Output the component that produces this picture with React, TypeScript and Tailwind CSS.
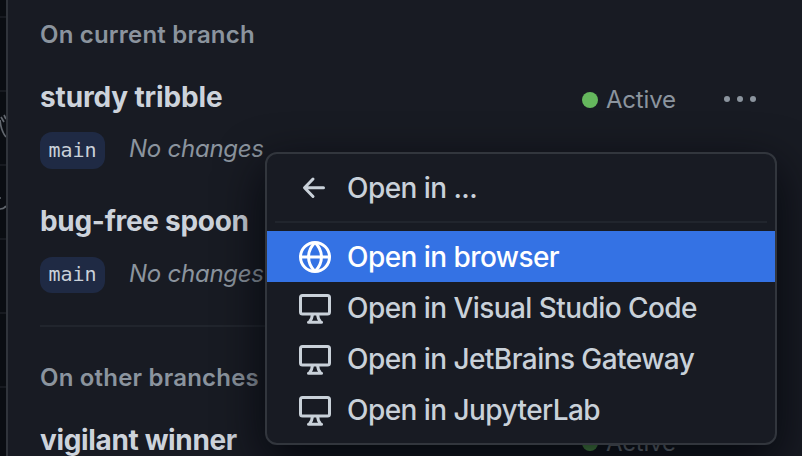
import type { ReactNode } from 'react';

const sans = "font-['Inter','Liberation_Sans',sans-serif]";

function DesktopIcon() {
  return (
    <svg className="h-8 w-8 shrink-0" viewBox="0 0 16 16" fill="none" stroke="currentColor" strokeWidth="1.5">
      <rect x=".75" y="1.75" width="14.5" height="9.25" rx="1" />
      <path d="M6.7 11c-.05 1.7-.45 2.7-1.4 3.75M9.3 11c.05 1.7.45 2.7 1.4 3.75" />
      <path d="M4.75 15.1h6.5" strokeLinecap="round" />
    </svg>
  );
}

function GlobeIcon() {
  return (
    <svg className="h-8 w-8 shrink-0" viewBox="0 0 16 16" fill="none" stroke="currentColor" strokeWidth="1.5">
      <circle cx="8" cy="8" r="7.25" />
      <path d="M.75 8h14.5M8 .75C3.7 5 3.7 11 8 15.25M8 .75c4.3 4.25 4.3 10.25 0 14.5" />
    </svg>
  );
}

function ArrowIcon() {
  return (
    <svg className="h-8 w-8 shrink-0" viewBox="0 0 32 32" fill="none" stroke="currentColor" strokeWidth="3" strokeLinecap="round" strokeLinejoin="round">
      <path d="M14 7 5.5 15.75l8.5 8.75M6 15.75h18.5" />
    </svg>
  );
}

function Status({ menu }: { menu?: boolean }) {
  return (
    <div className="flex items-center pt-[5px] text-2xl/9 text-[#8b949e]">
      <span className="mr-2 size-4 rounded-full bg-[#65b75d]" />
      <span className="w-[118px] tracking-[-0.2px]">Active</span>
      <div className="mb-0.5 h-2 w-8">
        {menu && (
          <svg className="h-2 w-8" viewBox="0 0 32 8" fill="currentColor">
            <circle cx="3" cy="4" r="3" />
            <circle cx="16" cy="4" r="3" />
            <circle cx="29" cy="4" r="3" />
          </svg>
        )}
      </div>
    </div>
  );
}

function Title({ name, className = '', children }: { name: string; className?: string; children?: ReactNode }) {
  return (
    <div className={`flex h-9 shrink-0 items-center justify-between pr-[46px] ${className}`}>
      <span className="text-[28px]/9 font-bold text-[#cdd3db]">{name}</span>
      {children}
    </div>
  );
}

function Branch({ className }: { className: string }) {
  return (
    <div className={`flex shrink-0 ${className}`}>
      <span className="flex h-full w-[65px] items-center justify-center rounded-xl bg-[#1f2a44] pb-0.5 font-['DejaVu_Sans_Mono',monospace] text-[20px] text-[#c9d1d9]">
        main
      </span>
      <span className="ml-6 text-2xl/[34px] tracking-[-0.25px] text-[#8b949e] italic">No changes</span>
    </div>
  );
}

function Item({ icon, children, active }: { icon: ReactNode; children: ReactNode; active?: boolean }) {
  return (
    <div className={`flex h-[51px] items-center gap-4 pl-8 text-[28px]/9 ${active ? 'bg-[#3472e4] text-white' : 'text-[#c9d1d9]'}`}>
      {icon}
      <span className="font-[450] tracking-[-0.56px] whitespace-nowrap">{children}</span>
    </div>
  );
}

export default function App() {
  return (
    <div className={`relative flex h-[456px] w-[802px] overflow-hidden bg-[#0a0d12] ${sans}`}>
      <div className="flex w-1.5 shrink-0 flex-col overflow-hidden">
        <div className="h-[18px] shrink-0 border-b-2 border-[#171a20]" />
        <div className="h-[74px] shrink-0 border-b-2 border-[#171a20]" />
        <div className="h-[74px] shrink-0 border-b-2 border-[#171a20]">
          <svg className="h-[72px] w-1.5" viewBox="0 0 6 72" fill="none" stroke="#62676e" strokeWidth="1.7">
            <path d="M0 28q1 11 6 17M1 25l3 5M4 23l2 4" />
          </svg>
        </div>
        <div className="h-[74px] shrink-0 border-b-2 border-[#171a20]">
          <svg className="h-[72px] w-1.5" viewBox="0 0 6 72" fill="none" stroke="#62676e" strokeWidth="1.7">
            <path d="M0 43q4 0 6-3M0 32h1" />
          </svg>
        </div>
        <div className="h-[74px] shrink-0 border-b-2 border-[#171a20]" />
        <div className="h-[74px] shrink-0 border-b-2 border-[#171a20]" />
      </div>
      <div className="flex grow flex-col border-l-2 border-[#30343b] bg-[#181b23] pt-[17px] pl-8">
        <div className="h-9 shrink-0 text-2xl/9 font-semibold tracking-[0.2px] text-[#8b949e]">On current branch</div>
        <Title name="sturdy tribble" className="mt-[26px] tracking-[-0.15px]">
          <Status menu />
        </Title>
        <Branch className="mt-[17px] h-[37px]" />
        <Title name="bug-free spoon" className="mt-[34px] tracking-[-0.3px]" />
        <Branch className="mt-[18px] h-9" />
        <div className="mt-8 mr-[46px] h-0.5 shrink-0 bg-[#21252d]" />
        <div className="mt-[33px] h-9 shrink-0 text-2xl/9 font-semibold tracking-[0.2px] text-[#8b949e]">On other branches</div>
        <Title name="vigilant winner" className="mt-[26px] tracking-[-0.35px]">
          <Status />
        </Title>
      </div>
      <div className="absolute top-[152px] left-[265px] flex h-[293px] w-[512px] flex-col rounded-xl border-2 border-[#32363d] bg-[#181b23] py-2 shadow-[0_16px_48px_rgba(1,4,9,0.85)]">
        <Item icon={<ArrowIcon />}>Open in ...</Item>
        <div className="mx-2 my-2 h-0.5 shrink-0 bg-[#21252d]" />
        <Item icon={<GlobeIcon />} active>Open in browser</Item>
        <Item icon={<DesktopIcon />}>Open in Visual Studio Code</Item>
        <Item icon={<DesktopIcon />}>Open in JetBrains Gateway</Item>
        <Item icon={<DesktopIcon />}>Open in JupyterLab</Item>
      </div>
    </div>
  );
}
